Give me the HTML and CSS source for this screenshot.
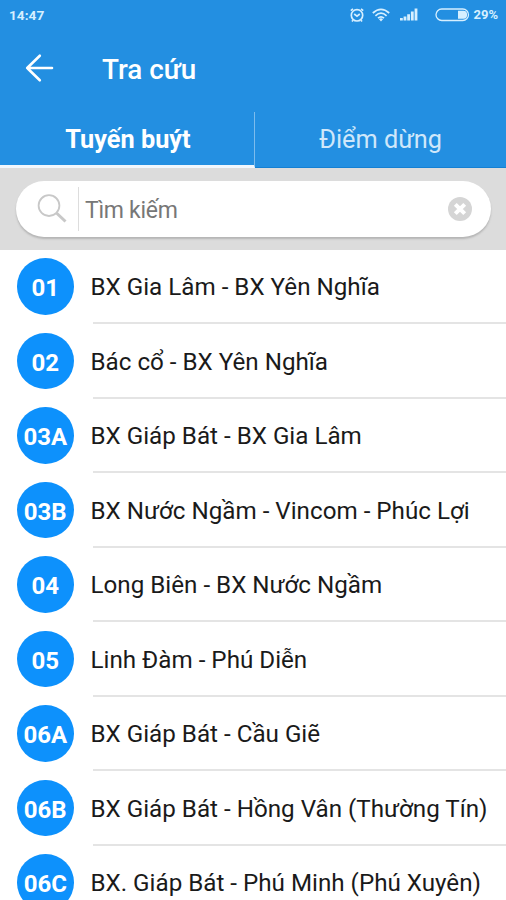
FILE: index.html
```
<!DOCTYPE html>
<html lang="vi">
<head>
    <meta charset="UTF-8">
    <meta name="viewport" content="width=device-width, initial-scale=1.0">
    <title>Tra cứu</title>
    <link rel="stylesheet" href="styles.css">
</head>
<body>

    <header>
        <div class="status-bar">
            <span class="time">14:47</span>
            <svg class="alarm" width="16" height="16" viewBox="0 0 16 16">
                <circle cx="8" cy="8.3" r="5.7"/>
                <path d="M1.8 3.6L4 1.8M14.2 3.6L12 1.8M5.2 7L8 9.2L10.8 7M4 13.2L3 14.5M12 13.2L13 14.5"/>
            </svg>
            <svg class="wifi" width="18" height="14" viewBox="0 0 18 14">
                <path d="M.8 5Q9 -2.4 17.2 5M3.4 7.8Q9 2.6 14.6 7.8M6 10.2Q9 7.4 12 10.2"/>
                <path class="fill" d="M7 11.2Q9 9.4 11 11.2L9 13.6Z"/>
            </svg>
            <svg class="signal" width="18" height="13" viewBox="0 0 18 13">
                <path d="M0 10h2.8v2.5H0zM3.6 8.5h2.8v4H3.6zM7.2 6.3H10v6.2H7.2zM10.9 3.5h2.8v9h-2.8zM14.6 .5h2.8v12h-2.8z"/>
            </svg>
            <svg class="battery" width="35" height="14" viewBox="0 0 35 14">
                <rect x="1" y="1" width="32.5" height="11.5" rx="5.7"/>
                <path class="fill" d="M23 2.8h5.5q3.6 0 3.6 4t-3.6 4H23z"/>
            </svg>
            <span class="percent">29%</span>
        </div>
        <div class="title-bar">
            <svg class="back" width="30" height="30" viewBox="0 0 30 30">
                <path d="M28 15H3.2M15.8 2.7L3.2 15L15.8 27.3"/>
            </svg>
            <h1>Tra cứu</h1>
        </div>
        <nav>
            <div class="tab active">Tuyến buýt</div>
            <div class="tab">Điểm dừng</div>
        </nav>
    </header>

    <div class="search">
        <div class="search-box">
            <svg class="lens" width="30" height="30" viewBox="0 0 30 30">
                <circle cx="12" cy="11.6" r="10.4"/>
                <path class="handle" d="M19.5 19L28.5 27.5"/>
            </svg>
            <div class="search-text">Tìm kiếm</div>
            <svg class="clear" width="24" height="24" viewBox="0 0 24 24">
                <circle cx="12" cy="12" r="12"/>
                <path d="M7.3 7.3L16.7 16.7M16.7 7.3L7.3 16.7"/>
            </svg>
        </div>
    </div>

    <!-- DANH SÁCH TUYẾN -->
    <ul class="routes">
        <li><span class="badge">01</span><span class="name">BX Gia Lâm - BX Yên Nghĩa</span></li>
        <li><span class="badge">02</span><span class="name">Bác cổ - BX Yên Nghĩa</span></li>
        <li><span class="badge">03A</span><span class="name">BX Giáp Bát - BX Gia Lâm</span></li>
        <li><span class="badge">03B</span><span class="name">BX Nước Ngầm - Vincom - Phúc Lợi</span></li>
        <li><span class="badge">04</span><span class="name">Long Biên - BX Nước Ngầm</span></li>
        <li><span class="badge">05</span><span class="name">Linh Đàm - Phú Diễn</span></li>
        <li><span class="badge">06A</span><span class="name">BX Giáp Bát - Cầu Giẽ</span></li>
        <li><span class="badge">06B</span><span class="name">BX Giáp Bát - Hồng Vân (Thường Tín)</span></li>
        <li><span class="badge">06C</span><span class="name">BX. Giáp Bát - Phú Minh (Phú Xuyên)</span></li>
    </ul>

</body>
</html>
```
FILE: styles.css
```
* { box-sizing: border-box; }
body { background: #fff; color: #1a1a1a; font-family: Roboto, sans-serif; margin: 0; height: 900px; overflow: hidden; }
svg { display: block; fill: none; flex: none; }

/* HEADER */
header { background: #238fe1; color: #fff; }

.status-bar {
    display: flex; align-items: center; height: 30px; padding: 0 8px 1px 9px;
    color: #d6efff; font-size: 13px; font-weight: bold;
}
.status-bar svg { stroke: #d6efff; stroke-width: 1.7; }
.status-bar .fill, .status-bar .signal { fill: #d6efff; stroke: none; }
.time { flex: 1; font-size: 13.7px; }
.alarm { margin-right: 7px; }
.wifi { margin-right: 10px; }
.signal { margin-right: 17px; }
.status-bar .battery { margin-right: 3px; stroke-width: 1.3; }

.title-bar { display: flex; align-items: center; height: 76px; padding-left: 24px; }
.back { stroke: #fff; stroke-width: 2.6; stroke-linecap: round; stroke-linejoin: round; }
h1 { margin: 3px 0 0 48px; font-size: 27.8px; font-weight: 500; line-height: 34px; }

nav { display: flex; height: 62px; align-items: flex-end; }
.tab {
    flex: 1; height: 56px; line-height: 56px; text-align: center;
    font-size: 25.3px; color: #cfe7fa; border-bottom: 1px solid #1480d3;
}
.tab.active {
    flex: none; width: 255px; padding-left: 2px; color: #fff; font-weight: bold;
    border-right: 1px solid #7cbced; border-bottom: 3px solid #f1f7fd;
}

/* SEARCH */
.search { background: #dcdcdc; height: 82px; padding: 13px 15px 0 16px; }
.search-box {
    display: flex; align-items: center; height: 56px; padding: 0 19px 0 21px;
    background: #fff; border-radius: 28px; box-shadow: 0 2px 2px #b5b5b5;
}
.lens { stroke: #c8c8c8; stroke-width: 1.8; }
.handle { stroke-width: 3; }
.search-text {
    flex: 1; height: 44px; line-height: 47px; margin-left: 11px; padding-left: 6px;
    border-left: 1px solid #ddd; color: #777; font-size: 23px; letter-spacing: -0.3px;
}
.clear { fill: #d5d5d5; }
.clear path { stroke: #fff; stroke-width: 4; }

/* ROUTES */
.routes { list-style: none; margin: 0; padding: 8px 0 0 17px; }
.routes li { display: flex; height: 74.5px; }
.badge {
    flex: none; width: 56.5px; height: 56.5px; border-radius: 50%; background: #0d91fc;
    color: #fff; font-size: 24px; font-weight: bold; line-height: 60px; text-align: center;
}
.name {
    flex: 1; height: 66px; margin-left: 19.5px; border-bottom: 2px solid #e4e4e4;
    font-size: 24.2px; line-height: 59.5px; text-indent: -2.5px; white-space: nowrap;
}
```
